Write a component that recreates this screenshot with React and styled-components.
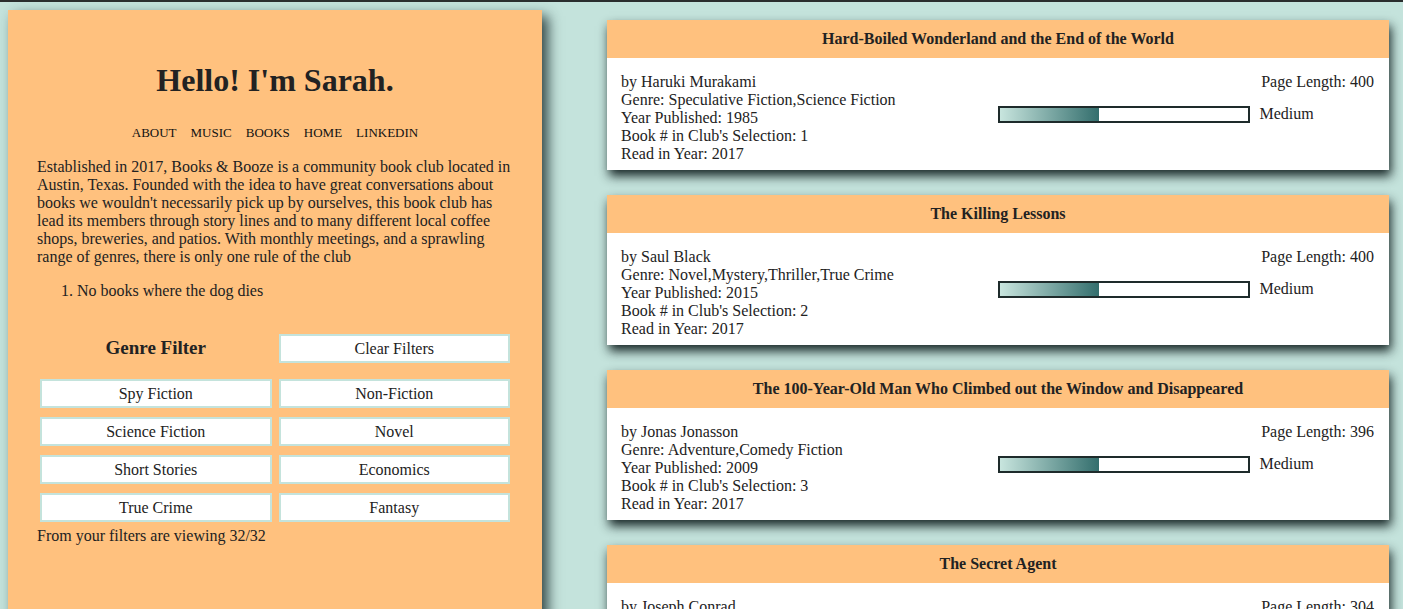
import React from 'react';
import styled, { createGlobalStyle } from 'styled-components';

const GlobalStyle = createGlobalStyle`
  html, body {
    margin: 0;
    padding: 0;
    background: #c4e3dc;
  }
  body {
    border-top: 2px solid #2a2e2e;
    padding: 8px 14px 0 8px;
    font-family: "Liberation Serif", "Times New Roman", serif;
    color: #222;
  }
`;

const Page = styled.div`
  display: flex;
  align-items: flex-start;
`;

const Sidebar = styled.aside`
  flex: 0 0 534px;
  min-height: 660px;
  box-sizing: border-box;
  background: #ffc17e;
  padding: 52px 29px 0;
  box-shadow: 6px 6px 12px rgba(25, 45, 45, 0.85);
`;

const Title = styled.h1`
  margin: 0;
  font-size: 32px;
  line-height: 37px;
  text-align: center;
`;

const Nav = styled.nav`
  display: flex;
  justify-content: center;
  gap: 14px;
  margin-top: 26px;
  font-size: 13px;
  line-height: 16px;
`;

const NavLink = styled.a`
  color: #111;
  text-decoration: none;
  text-transform: uppercase;
`;

const Intro = styled.p`
  margin: 17px 0 0;
  font-size: 16px;
  line-height: 18px;
`;

const Rules = styled.ol`
  margin: 16px 0 0;
  padding-left: 40px;
  font-size: 16px;
  line-height: 18px;
`;

const FilterGrid = styled.div`
  display: grid;
  grid-template-columns: 1fr 1fr;
  column-gap: 7px;
  row-gap: 9px;
  margin: 34px 3px 0;
`;

const FilterHeading = styled.h3`
  margin: 0;
  font-size: 19px;
  line-height: 22px;
  text-align: center;
  align-self: center;
  padding-bottom: 9px;
`;

const FilterButton = styled.button`
  height: 29px;
  background: #fff;
  border: 2px solid #c4e3dc;
  font-family: "Liberation Serif", "Times New Roman", serif;
  font-size: 16px;
  color: #222;
  margin-bottom: ${p => (p.$spaced ? '7px' : '0')};
  cursor: pointer;
`;

const Counter = styled.p`
  margin: 5px 0 0;
  font-size: 16px;
  line-height: 18px;
`;

const BookList = styled.main`
  flex: 1;
  display: flex;
  flex-direction: column;
  gap: 25px;
  padding: 10px 0 0 65px;
`;

const Card = styled.section`
  background: #fff;
  box-shadow: 2px 6px 10px rgba(15, 30, 30, 0.95);
`;

const CardHeader = styled.h2`
  margin: 0;
  height: 38px;
  display: flex;
  align-items: center;
  justify-content: center;
  background: #ffc17e;
  font-size: 16px;
`;

const CardBody = styled.div`
  display: grid;
  grid-template-columns: 1fr 1fr;
  padding: 15px 15px 7px 14px;
  font-size: 16px;
  line-height: 18px;
`;

const Details = styled.div`
  display: flex;
  flex-direction: column;
`;

const Stats = styled.div`
  display: flex;
  flex-direction: column;
`;

const PageLength = styled.div`
  text-align: right;
`;

const MeterRow = styled.div`
  display: flex;
  align-items: center;
  gap: 10px;
  margin-top: 14px;
`;

const Meter = styled.div`
  width: 248px;
  height: 13px;
  border: 2px solid #1e2b2b;
  background: #fff;
`;

const MeterFill = styled.div`
  height: 100%;
  background: linear-gradient(to right, #c8e5de, #336e6d);
`;

const genres = [
  'Spy Fiction', 'Non-Fiction',
  'Science Fiction', 'Novel',
  'Short Stories', 'Economics',
  'True Crime', 'Fantasy',
];

const books = [
  {
    title: 'Hard-Boiled Wonderland and the End of the World',
    author: 'Haruki Murakami',
    genre: 'Speculative Fiction,Science Fiction',
    year: 1985,
    num: 1,
    read: 2017,
    pages: 400,
  },
  {
    title: 'The Killing Lessons',
    author: 'Saul Black',
    genre: 'Novel,Mystery,Thriller,True Crime',
    year: 2015,
    num: 2,
    read: 2017,
    pages: 400,
  },
  {
    title: 'The 100-Year-Old Man Who Climbed out the Window and Disappeared',
    author: 'Jonas Jonasson',
    genre: 'Adventure,Comedy Fiction',
    year: 2009,
    num: 3,
    read: 2017,
    pages: 396,
  },
  {
    title: 'The Secret Agent',
    author: 'Joseph Conrad',
    genre: 'Spy Fiction,Novel',
    year: 1907,
    num: 4,
    read: 2017,
    pages: 304,
  },
];

const BookCard = ({ book }) => (
  <Card>
    <CardHeader>{book.title}</CardHeader>
    <CardBody>
      <Details>
        <span>by {book.author}</span>
        <span>Genre: {book.genre}</span>
        <span>Year Published: {book.year}</span>
        <span>Book # in Club's Selection: {book.num}</span>
        <span>Read in Year: {book.read}</span>
      </Details>
      <Stats>
        <PageLength>Page Length: {book.pages}</PageLength>
        <MeterRow>
          <Meter>
            <MeterFill style={{ width: `${Math.round((book.pages / 1000) * 100)}%` }} />
          </Meter>
          <span>Medium</span>
        </MeterRow>
      </Stats>
    </CardBody>
  </Card>
);

const App = () => (
  <>
    <GlobalStyle />
    <Page>
      <Sidebar>
        <Title>Hello! I'm Sarah.</Title>
        <Nav>
          {['About', 'Music', 'Books', 'Home', 'LinkedIn'].map(item => (
            <NavLink key={item} href="#">{item}</NavLink>
          ))}
        </Nav>
        <Intro>
          Established in 2017, Books &amp; Booze is a community book club located in
          Austin, Texas. Founded with the idea to have great conversations about
          books we wouldn't necessarily pick up by ourselves, this book club has
          lead its members through story lines and to many different local coffee
          shops, breweries, and patios. With monthly meetings, and a sprawling
          range of genres, there is only one rule of the club
        </Intro>
        <Rules>
          <li>No books where the dog dies</li>
        </Rules>
        <FilterGrid>
          <FilterHeading>Genre Filter</FilterHeading>
          <FilterButton $spaced>Clear Filters</FilterButton>
          {genres.map(g => (
            <FilterButton key={g}>{g}</FilterButton>
          ))}
        </FilterGrid>
        <Counter>From your filters are viewing 32/32</Counter>
      </Sidebar>
      <BookList>
        {books.map(b => (
          <BookCard key={b.title} book={b} />
        ))}
      </BookList>
    </Page>
  </>
);

export default App;
